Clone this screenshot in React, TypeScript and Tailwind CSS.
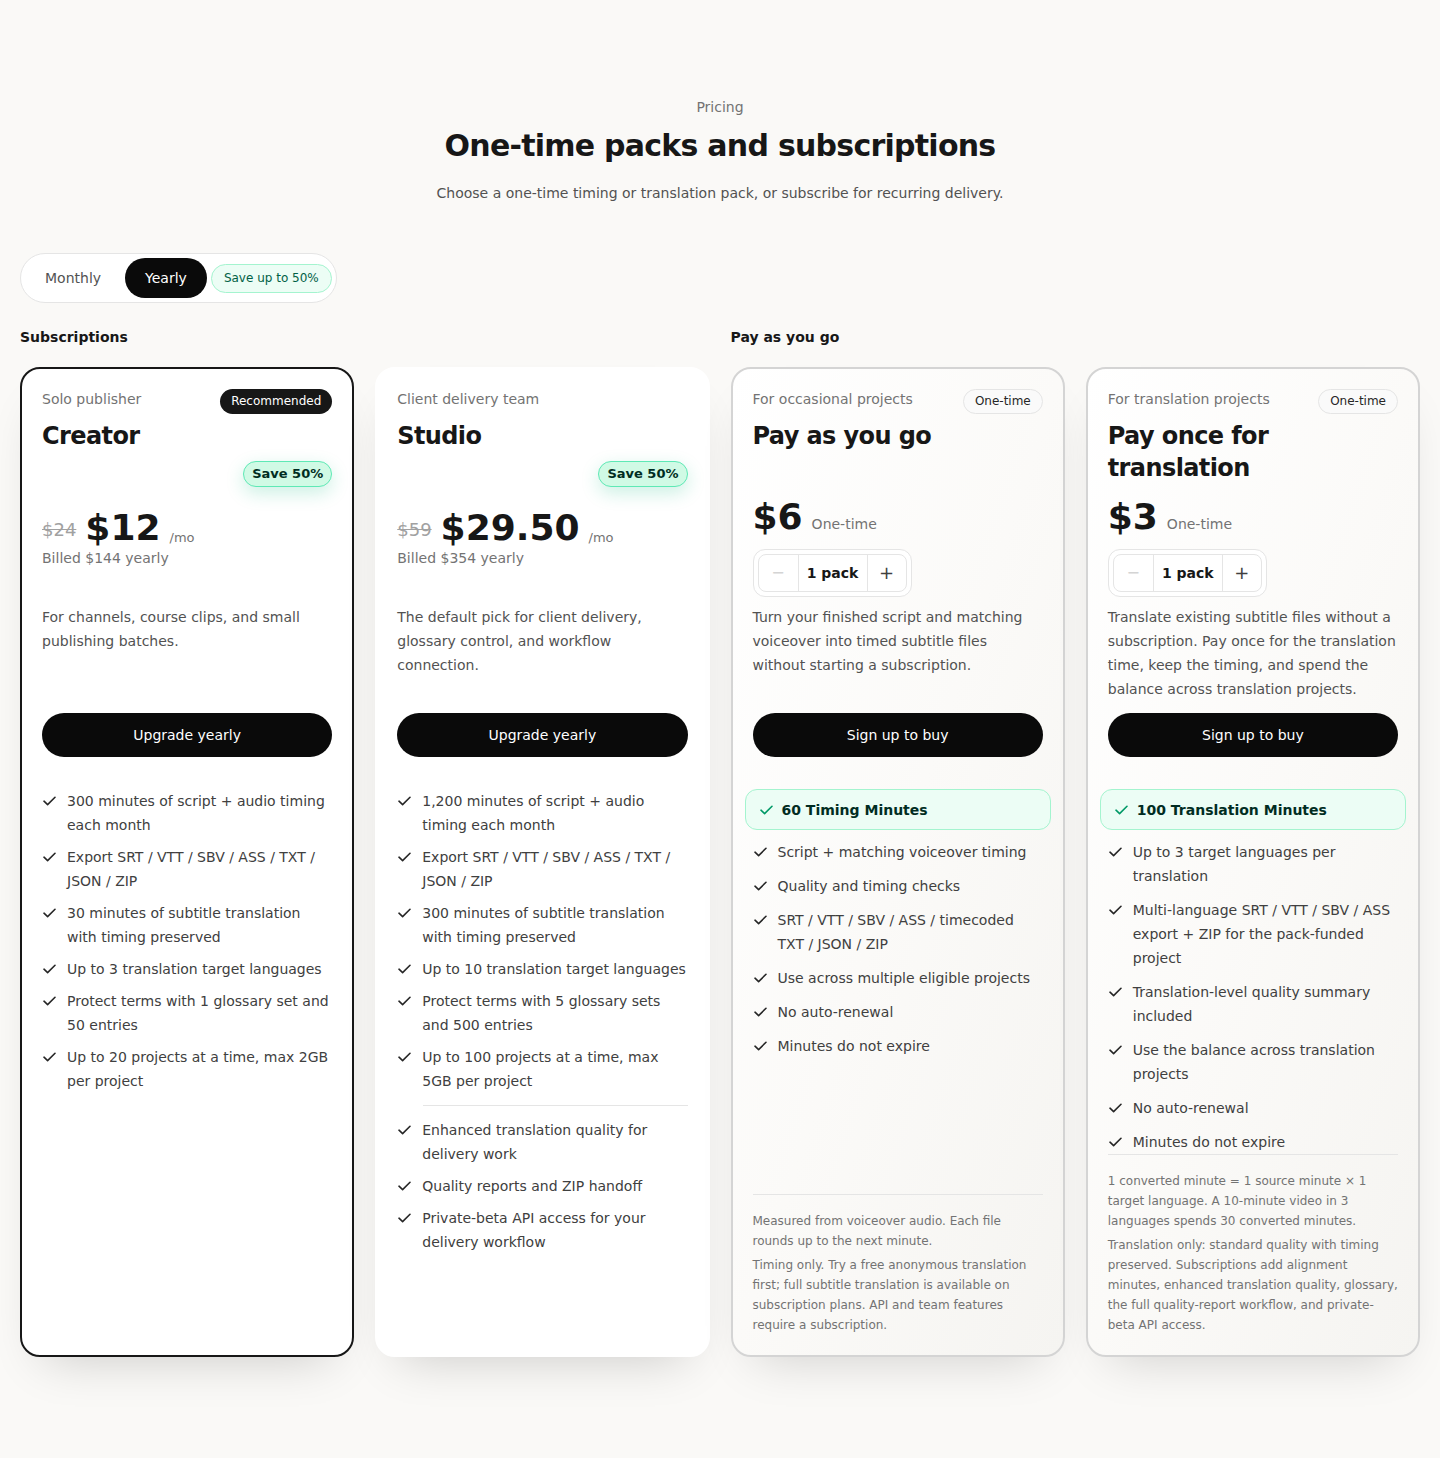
import React from 'react';

type Feature = string | { divider: true };

const CheckIcon = ({ className = 'text-neutral-800' }: { className?: string }) => (
  <svg width="13" height="10" viewBox="0 0 13 10" fill="none" className={className}>
    <path d="M1 5.2 4.6 8.6 12 1.3" stroke="currentColor" strokeWidth="1.6" strokeLinecap="round" strokeLinejoin="round" />
  </svg>
);

function FeatureList({ items, gap }: { items: Feature[]; gap: string }) {
  return (
    <ul className={`flex flex-col ${gap}`}>
      {items.map((f, i) =>
        typeof f === 'string' ? (
          <li key={i} className="flex items-start gap-[11px] text-sm leading-6 text-neutral-700">
            <span className="ml-px flex h-6 shrink-0 items-center">
              <CheckIcon />
            </span>
            <span>{f}</span>
          </li>
        ) : (
          <li key={i} className="my-1 ml-[26px] border-t border-neutral-200" />
        )
      )}
    </ul>
  );
}

function SubscriptionCard(props: {
  eyebrow: string;
  name: string;
  oldPrice: string;
  price: string;
  billed: string;
  description: string;
  features: Feature[];
  recommended?: boolean;
}) {
  return (
    <div
      className={`flex flex-col rounded-[20px] border-2 bg-white p-5 shadow-[0_24px_48px_-24px_rgba(0,0,0,0.2)] ${
        props.recommended ? 'border-neutral-900' : 'border-white'
      }`}
    >
      <div className="flex h-[216px] flex-col">
        <div className="flex h-[26px] items-start justify-between">
          <span className="text-sm leading-5 text-neutral-500">{props.eyebrow}</span>
          {props.recommended && (
            <span className="rounded-full bg-neutral-900 px-[11px] py-1 text-xs leading-[17px] text-white">Recommended</span>
          )}
        </div>
        <h3 className="mt-[5px] text-2xl leading-8 font-bold tracking-tight text-neutral-900">{props.name}</h3>
        <div className="mt-[9px] flex h-[26px] justify-end">
          <span className="flex items-center rounded-full border border-emerald-300 bg-emerald-100 px-2 text-[13px] font-bold text-emerald-950 shadow-[0_6px_18px_rgba(16,185,129,0.22)]">
            Save 50%
          </span>
        </div>
        <div className="mt-[21px] flex h-10 items-end gap-[9px]">
          <span className="mb-1 text-lg leading-7 text-neutral-400 line-through">{props.oldPrice}</span>
          <span className="text-4xl leading-10 font-bold text-neutral-900">{props.price}</span>
          <span className="text-[13px] leading-5 text-neutral-500">/mo</span>
        </div>
        <p className="text-sm leading-5 text-neutral-500">{props.billed}</p>
      </div>
      <p className="min-h-24 text-sm leading-6 text-neutral-600">{props.description}</p>
      <button className="mt-3 h-11 w-full rounded-full bg-neutral-950 text-sm text-white">Upgrade yearly</button>
      <div className="mt-8">
        <FeatureList items={props.features} gap="gap-2" />
      </div>
    </div>
  );
}

function PackCard(props: {
  eyebrow: string;
  name: string;
  price: string;
  description: string;
  highlight: string;
  features: Feature[];
  notes: string[];
}) {
  return (
    <div className="flex flex-col rounded-[20px] border-2 border-neutral-300 bg-linear-to-br from-white via-[#fbfaf8] to-[#f5f4f1] p-5 shadow-[0_24px_48px_-24px_rgba(0,0,0,0.18)]">
      <div className="flex h-[216px] flex-col">
        <div className="flex h-[26px] items-start justify-between">
          <span className="text-sm leading-5 text-neutral-500">{props.eyebrow}</span>
          <span className="rounded-full border border-neutral-200 bg-neutral-50 px-[11px] py-[3px] text-xs leading-[17px] text-neutral-800">
            One-time
          </span>
        </div>
        <h3 className="mt-[5px] min-h-16 text-2xl leading-8 font-bold tracking-tight text-neutral-900">{props.name}</h3>
        <div className="mt-[13px] flex h-10 items-baseline gap-[9px]">
          <span className="text-4xl leading-10 font-bold text-neutral-900">{props.price}</span>
          <span className="text-sm text-neutral-500">One-time</span>
        </div>
        <div className="mt-3 flex h-12 w-[159px] rounded-xl border border-neutral-200 bg-white p-1">
          <div className="flex flex-1 overflow-hidden rounded-lg border border-neutral-200">
            <button className="flex w-10 items-center justify-center border-r border-neutral-200 text-base text-neutral-300">−</button>
            <span className="flex flex-1 items-center justify-center border-r border-neutral-200 text-sm font-bold text-neutral-900">1 pack</span>
            <button className="flex w-[38px] items-center justify-center text-lg text-neutral-700">+</button>
          </div>
        </div>
      </div>
      <p className="min-h-24 text-sm leading-6 text-neutral-600">{props.description}</p>
      <button className="mt-3 h-11 w-full rounded-full bg-neutral-950 text-sm text-white">Sign up to buy</button>
      <div className="mt-8 flex flex-col gap-[10px]">
        <div className="-mx-2 flex h-[41px] items-center gap-[9px] rounded-xl border border-emerald-200 bg-emerald-50 px-[14px] text-sm font-bold text-emerald-950">
          <CheckIcon className="text-emerald-600" />
          <span>{props.highlight}</span>
        </div>
        <FeatureList items={props.features} gap="gap-[10px]" />
      </div>
      <div className="mt-auto flex flex-col gap-1 border-t border-neutral-200 pt-4 text-xs leading-5 text-neutral-500">
        {props.notes.map((n, i) => (
          <p key={i}>{n}</p>
        ))}
      </div>
    </div>
  );
}

export default function App() {
  return (
    <div className="min-h-[1458px] bg-[#faf9f7] font-['DejaVu_Sans',sans-serif]">
      <div className="mx-auto max-w-[1440px] px-5 pt-[97px] pb-24">
        {/* Heading */}
        <div className="flex flex-col items-center text-center">
          <p className="text-sm leading-5 text-neutral-500">Pricing</p>
          <h1 className="mt-[9px] text-3xl leading-10 font-bold tracking-tight text-neutral-900">One-time packs and subscriptions</h1>
          <p className="mt-[17px] text-sm leading-5 text-neutral-600">
            Choose a one-time timing or translation pack, or subscribe for recurring delivery.
          </p>
        </div>

        {/* Billing toggle */}
        <div className="mt-[50px] inline-flex items-center gap-1 rounded-full border border-neutral-200 bg-white p-1">
          <button className="h-10 rounded-full px-5 text-sm text-neutral-600">Monthly</button>
          <button className="h-10 rounded-full bg-neutral-950 px-5 text-sm text-white">Yearly</button>
          <span className="flex h-[29px] items-center rounded-full border border-emerald-200 bg-emerald-50 px-3 text-xs text-emerald-800">
            Save up to 50%
          </span>
        </div>

        <div className="mt-6 grid grid-cols-4 gap-x-[21px]">
          <h2 className="col-span-2 text-sm leading-5 font-bold text-neutral-900">Subscriptions</h2>
          <h2 className="col-span-2 text-sm leading-5 font-bold text-neutral-900">Pay as you go</h2>
        </div>

        <div className="mt-5 grid grid-cols-4 gap-[21px]">
          <SubscriptionCard
            recommended
            eyebrow="Solo publisher"
            name="Creator"
            oldPrice="$24"
            price="$12"
            billed="Billed $144 yearly"
            description="For channels, course clips, and small publishing batches."
            features={[
              '300 minutes of script + audio timing each month',
              'Export SRT / VTT / SBV / ASS / TXT / JSON / ZIP',
              '30 minutes of subtitle translation with timing preserved',
              'Up to 3 translation target languages',
              'Protect terms with 1 glossary set and 50 entries',
              'Up to 20 projects at a time, max 2GB per project',
            ]}
          />
          <SubscriptionCard
            eyebrow="Client delivery team"
            name="Studio"
            oldPrice="$59"
            price="$29.50"
            billed="Billed $354 yearly"
            description="The default pick for client delivery, glossary control, and workflow connection."
            features={[
              '1,200 minutes of script + audio timing each month',
              'Export SRT / VTT / SBV / ASS / TXT / JSON / ZIP',
              '300 minutes of subtitle translation with timing preserved',
              'Up to 10 translation target languages',
              'Protect terms with 5 glossary sets and 500 entries',
              'Up to 100 projects at a time, max 5GB per project',
              { divider: true },
              'Enhanced translation quality for delivery work',
              'Quality reports and ZIP handoff',
              'Private-beta API access for your delivery workflow',
            ]}
          />
          <PackCard
            eyebrow="For occasional projects"
            name="Pay as you go"
            price="$6"
            description="Turn your finished script and matching voiceover into timed subtitle files without starting a subscription."
            highlight="60 Timing Minutes"
            features={[
              'Script + matching voiceover timing',
              'Quality and timing checks',
              'SRT / VTT / SBV / ASS / timecoded TXT / JSON / ZIP',
              'Use across multiple eligible projects',
              'No auto-renewal',
              'Minutes do not expire',
            ]}
            notes={[
              'Measured from voiceover audio. Each file rounds up to the next minute.',
              'Timing only. Try a free anonymous translation first; full subtitle translation is available on subscription plans. API and team features require a subscription.',
            ]}
          />
          <PackCard
            eyebrow="For translation projects"
            name="Pay once for translation"
            price="$3"
            description="Translate existing subtitle files without a subscription. Pay once for the translation time, keep the timing, and spend the balance across translation projects."
            highlight="100 Translation Minutes"
            features={[
              'Up to 3 target languages per translation',
              'Multi-language SRT / VTT / SBV / ASS export + ZIP for the pack-funded project',
              'Translation-level quality summary included',
              'Use the balance across translation projects',
              'No auto-renewal',
              'Minutes do not expire',
            ]}
            notes={[
              '1 converted minute = 1 source minute × 1 target language. A 10-minute video in 3 languages spends 30 converted minutes.',
              'Translation only: standard quality with timing preserved. Subscriptions add alignment minutes, enhanced translation quality, glossary, the full quality-report workflow, and private-beta API access.',
            ]}
          />
        </div>
      </div>
    </div>
  );
}
